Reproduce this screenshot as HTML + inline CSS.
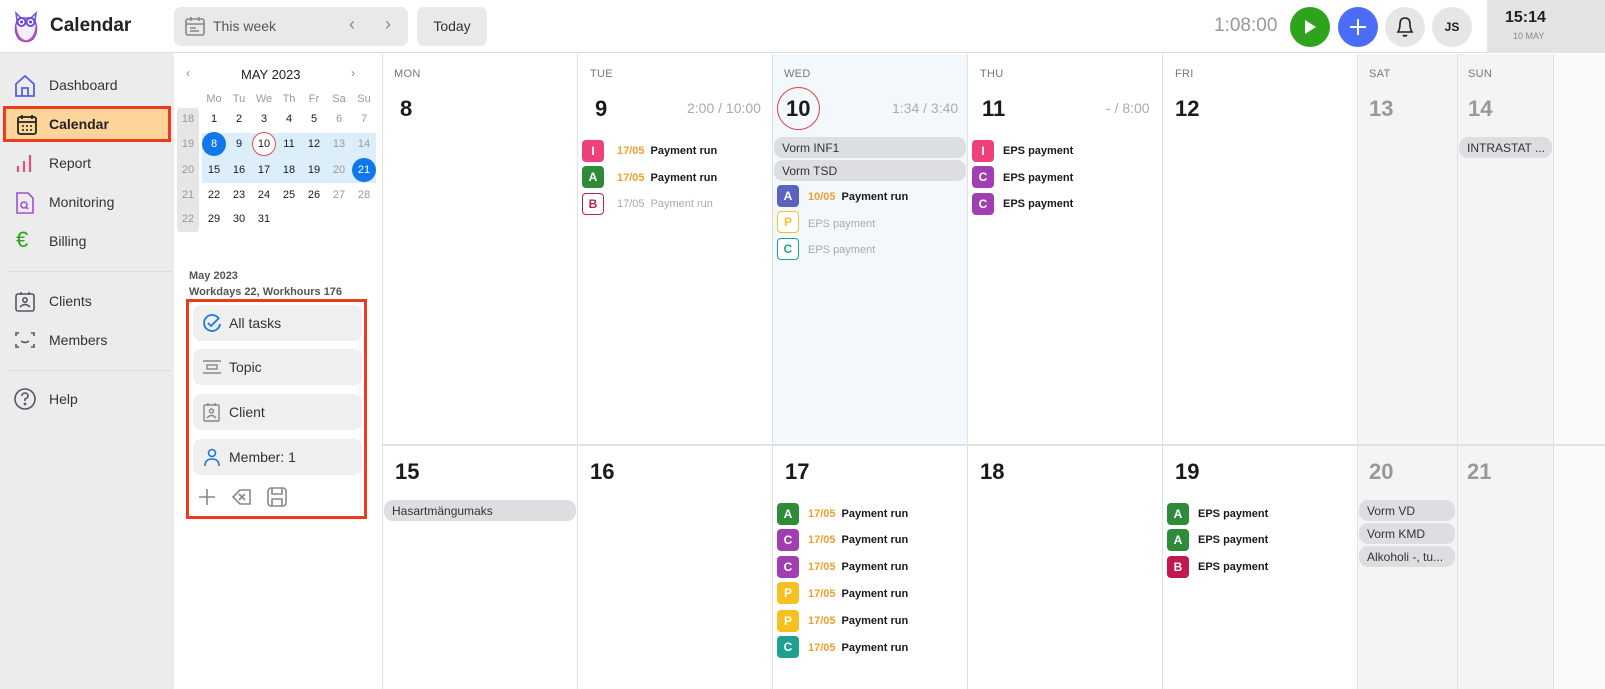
<!DOCTYPE html>
<html><head><meta charset="utf-8">
<style>
*{box-sizing:border-box;margin:0;padding:0}
body{width:1605px;height:689px;overflow:hidden;background:#fff;font-family:"Liberation Sans",sans-serif;color:#1a1a1a;position:relative}
.a{position:absolute}
.side{left:0;top:53px;width:174px;height:636px;background:#ececec}
.nav{position:absolute;left:0;width:174px;height:36px;font-size:14px;color:#333}
.nav span{position:absolute;left:49px;top:10px}
.nav svg{position:absolute;left:14px;top:7px}
.mc{font-size:11px;text-align:center;width:20px;margin-left:-10px}
.dh{font-size:11px;color:#777;letter-spacing:.3px}
.dn{font-size:22px;font-weight:bold}
.vl{width:1px;background:#e1e1e1}
.b{position:absolute;width:22px;height:22px;border-radius:4px;color:#fff;font-size:12px;font-weight:bold;text-align:center;line-height:22px}
.bo{background:#fff;line-height:20px}
.et{position:absolute;font-size:11px;font-weight:bold;white-space:nowrap}
.et i{font-style:normal;color:#f0a030;margin-right:6px}
.pill{position:absolute;height:21px;border-radius:9px;background:#dcdee2;font-size:12px;color:#333;padding:4px 8px;white-space:nowrap}
.fb{position:absolute;left:193px;width:169px;height:36px;background:#efefef;border-radius:8px;font-size:14px;color:#333}
.fb span{position:absolute;left:36px;top:10px}
.fb svg{position:absolute;left:9px;top:8px}
</style></head><body>
<div class="a" style="left:0;top:0;width:1605px;height:53px;border-bottom:1px solid #ddd;background:#fff"></div>
<svg class="a" style="left:13px;top:11px" width="26" height="32" viewBox="0 0 26 32"><path d="M3 2 L8 7 L18 7 L23 2 L22 10 Q26 20 20 28 Q13 33 6 28 Q0 20 4 10Z" fill="#f3eefc" stroke="#7b4fd8" stroke-width="1.5"/><circle cx="8.5" cy="11" r="4" fill="#fff" stroke="#6a4be0" stroke-width="2"/><circle cx="17.5" cy="11" r="4" fill="#fff" stroke="#6a4be0" stroke-width="2"/><circle cx="8.5" cy="11" r="1.5" fill="#5b3fd0"/><circle cx="17.5" cy="11" r="1.5" fill="#5b3fd0"/><path d="M3 16 Q4 28 13 30 Q22 28 23 16" fill="none" stroke="#d04fa0" stroke-width="1.5"/></svg>
<div class="a" style="left:50px;top:15px;font-size:19px;font-weight:bold;color:#222">Calendar</div>
<div class="a" style="left:174px;top:7px;width:234px;height:39px;background:#e9e9e9;border-radius:7px"></div>
<svg class="a" style="left:184px;top:15px" width="22" height="22" viewBox="0 0 22 22" fill="none" stroke="#888" stroke-width="1.6"><rect x="2" y="4" width="18" height="16" rx="2"/><path d="M2 9h18M7 2v4M15 2v4M6 13h6M6 16h9"/></svg>
<div class="a" style="left:213px;top:18px;font-size:14px;color:#555">This week</div>
<div class="a" style="left:349px;top:14px;font-size:18px;color:#888">&#8249;</div>
<div class="a" style="left:385px;top:14px;font-size:18px;color:#888">&#8250;</div>
<div class="a" style="left:417px;top:7px;width:70px;height:39px;background:#e9e9e9;border-radius:7px;font-size:14px;color:#333;text-align:center;line-height:39px">Today</div>
<div class="a" style="left:1214px;top:15px;font-size:19px;color:#999">1:08:00</div>
<div class="a" style="left:1290px;top:7px;width:40px;height:40px;border-radius:50%;background:#2ea41c"></div>
<svg class="a" style="left:1303px;top:19px" width="14" height="16"><path d="M2 1 L13 8 L2 15Z" fill="#fff"/></svg>
<div class="a" style="left:1338px;top:7px;width:40px;height:40px;border-radius:50%;background:#4a6cf7"></div>
<svg class="a" style="left:1348px;top:17px" width="20" height="20"><path d="M10 2v16M2 10h16" stroke="#fff" stroke-width="2"/></svg>
<div class="a" style="left:1385px;top:7px;width:40px;height:40px;border-radius:50%;background:#e6e6e6"></div>
<svg class="a" style="left:1395px;top:15px" width="20" height="24" fill="none" stroke="#222" stroke-width="1.6"><path d="M3 17 Q5 14 5 9 Q5 3 10 3 Q15 3 15 9 Q15 14 17 17Z"/><path d="M8 20 Q10 22 12 20"/></svg>
<div class="a" style="left:1432px;top:7px;width:40px;height:40px;border-radius:50%;background:#e6e6e6;font-size:12px;font-weight:bold;text-align:center;line-height:40px">JS</div>
<div class="a" style="left:1487px;top:0;width:118px;height:53px;background:#e3e3e3"></div>
<div class="a" style="left:1505px;top:9px;font-size:16px;font-weight:bold;color:#222">15:14</div>
<div class="a" style="left:1513px;top:31px;font-size:9px;color:#888">10 MAY</div>

<div class="a side"></div>
<div class="nav" style="top:67px"><svg width="22" height="24" fill="none" stroke="#5a5ee0" stroke-width="1.8"><path d="M2 10 L11 2 L20 10 V22 H2Z"/><path d="M8 22V14h6v8"/></svg><span>Dashboard</span></div>
<div class="nav" style="top:106px;left:3px;width:168px;height:36px;background:#fdd49a;border:3px solid #ee3a1c"><svg width="22" height="24" style="left:10px;top:4px" fill="none" stroke="#222" stroke-width="1.8"><rect x="2" y="4" width="18" height="17" rx="2"/><path d="M2 9h18M6 2v4M16 2v4"/><path d="M6 13h2M10 13h2M14 13h2M6 17h2M10 17h2M14 17h2" stroke-width="1.5"/></svg><span style="left:43px;top:7px;font-weight:bold;color:#222">Calendar</span></div>
<div class="nav" style="top:145px"><svg width="22" height="24" stroke="#e0507a" stroke-width="2.2"><path d="M4 20v-6M10 20V9M16 20V3"/></svg><span>Report</span></div>
<div class="nav" style="top:184px"><svg width="22" height="24" fill="none" stroke="#a050d0" stroke-width="1.6"><path d="M3 2h11l5 5v15H3Z"/><circle cx="10" cy="14" r="3"/><path d="M12 16l2 2"/></svg><span>Monitoring</span></div>
<div class="nav" style="top:223px"><span style="left:16px;top:4px;font-size:22px;color:#2ea41c">€</span><span>Billing</span></div>
<div class="a" style="left:8px;top:271px;width:164px;height:1px;background:#ddd"></div>
<div class="nav" style="top:283px"><svg width="22" height="24" fill="none" stroke="#556" stroke-width="1.6"><rect x="2" y="4" width="18" height="17" rx="2"/><path d="M7 2v3M15 2v3"/><circle cx="11" cy="10" r="2.2"/><path d="M6 17 Q11 12 16 17"/></svg><span>Clients</span></div>
<div class="nav" style="top:322px"><svg width="22" height="24" fill="none" stroke="#556" stroke-width="1.6"><path d="M2 7V4h3M17 4h3v3M2 15v3h3M17 18h3v-3M7 12 Q11 15 15 12"/></svg><span>Members</span></div>
<div class="a" style="left:8px;top:370px;width:164px;height:1px;background:#ddd"></div>
<div class="nav" style="top:381px"><svg width="24" height="24" fill="none" stroke="#556" stroke-width="1.6"><circle cx="11" cy="11" r="10"/><path d="M8 8 Q8 5 11 5 Q14 5 14 8 Q14 10 11 11v2"/><circle cx="11" cy="16" r=".6"/></svg><span>Help</span></div>

<div class="a" style="left:186px;top:66px;font-size:12px;color:#888">&#8249;</div>
<div class="a" style="left:241px;top:67px;font-size:13px;color:#222">MAY 2023</div>
<div class="a" style="left:351px;top:66px;font-size:12px;color:#888">&#8250;</div>
<div class="a" style="left:177px;top:108px;width:22px;height:124px;background:#e6e6e6;border-radius:3px"></div>
<div class="a" style="left:202px;top:133px;width:174px;height:50px;background:#ddeefb"></div>
<div class="a" style="left:202px;top:132px;width:24px;height:24px;border-radius:50%;background:#1078ea"></div>
<div class="a" style="left:252px;top:132px;width:24px;height:24px;border-radius:50%;border:1px solid #e05050;background:#fff"></div>
<div class="a" style="left:352px;top:158px;width:24px;height:24px;border-radius:50%;background:#1078ea"></div>

<div class="a" style="left:189px;top:270px;font-size:11px;font-weight:bold;color:#555">May 2023</div>
<div class="a" style="left:189px;top:286px;font-size:11px;font-weight:bold;color:#555">Workdays 22, Workhours 176</div>
<div class="a" style="left:186px;top:299px;width:181px;height:220px;border:3px solid #ee3a1c"></div>
<div class="fb" style="top:305px"><svg width="20" height="20" fill="none" stroke="#1a78e0" stroke-width="1.8"><path d="M17 6 A8 8 0 1 0 18 11"/><path d="M6 10l3 3 8-8"/></svg><span>All tasks</span></div>
<div class="fb" style="top:349px"><svg width="20" height="20" fill="none" stroke="#888" stroke-width="1.4"><path d="M1 4h18M1 16h18"/><rect x="5" y="8" width="10" height="4"/></svg><span>Topic</span></div>
<div class="fb" style="top:394px"><svg width="20" height="20" fill="none" stroke="#888" stroke-width="1.4"><rect x="2" y="3" width="15" height="16" rx="1"/><path d="M6 1v3M13 1v3"/><circle cx="9.5" cy="9" r="2"/><path d="M5 16 Q9.5 11 14 16"/></svg><span>Client</span></div>
<div class="fb" style="top:439px"><svg width="20" height="20" fill="none" stroke="#1a78e0" stroke-width="1.6"><circle cx="10" cy="6" r="3.5"/><path d="M3 19 Q3 12 10 12 Q17 12 17 19"/></svg><span>Member: 1</span></div>
<svg class="a" style="left:197px;top:486px" width="100" height="22" fill="none" stroke="#888" stroke-width="1.6"><path d="M10 3v16M2 11h16"/><path d="M53 4h-10l-7 7 7 7h10Z M42 8l6 6M48 8l-6 6"/><rect x="71" y="2" width="18" height="18" rx="3"/><path d="M75 2v6h10V2M75 20v-7h10v7"/></svg>

<div class="a" style="left:1357px;top:54px;width:196px;height:635px;background:#f4f4f4"></div>
<div class="a" style="left:1553px;top:54px;width:52px;height:635px;background:#fafafa"></div>
<div class="a" style="left:773px;top:54px;width:194px;height:390px;background:#f3f8fd"></div>
<div class="a vl" style="left:382px;top:54px;height:635px"></div>
<div class="a vl" style="left:577px;top:54px;height:635px"></div>
<div class="a vl" style="left:772px;top:54px;height:635px"></div>
<div class="a vl" style="left:967px;top:54px;height:635px"></div>
<div class="a vl" style="left:1162px;top:54px;height:635px"></div>
<div class="a vl" style="left:1357px;top:54px;height:635px"></div>
<div class="a vl" style="left:1457px;top:54px;height:635px"></div>
<div class="a vl" style="left:1553px;top:54px;height:635px"></div>
<div class="a" style="left:383px;top:444px;width:1222px;height:2px;background:#e1e1e1"></div>

<div class="a dh" style="left:394px;top:68px">MON</div>
<div class="a dh" style="left:590px;top:68px">TUE</div>
<div class="a dh" style="left:784px;top:68px">WED</div>
<div class="a dh" style="left:980px;top:68px">THU</div>
<div class="a dh" style="left:1175px;top:68px">FRI</div>
<div class="a dh" style="left:1369px;top:68px">SAT</div>
<div class="a dh" style="left:1468px;top:68px">SUN</div>

<div class="a dn" style="left:400px;top:96px">8</div>
<div class="a dn" style="left:595px;top:96px">9</div>
<div class="a" style="left:687px;top:100px;font-size:14px;color:#aaa">2:00 / 10:00</div>
<div class="a" style="left:777px;top:87px;width:43px;height:43px;border-radius:50%;border:1px solid #e04040"></div>
<div class="a dn" style="left:786px;top:96px">10</div>
<div class="a" style="left:892px;top:100px;font-size:14px;color:#aaa">1:34 / 3:40</div>
<div class="a dn" style="left:982px;top:96px">11</div>
<div class="a" style="left:1106px;top:100px;font-size:14px;color:#aaa">- / 8:00</div>
<div class="a dn" style="left:1175px;top:96px">12</div>
<div class="a dn" style="left:1369px;top:96px;color:#999">13</div>
<div class="a dn" style="left:1468px;top:96px;color:#999">14</div>

<div class="a dn" style="left:395px;top:459px">15</div>
<div class="a dn" style="left:590px;top:459px">16</div>
<div class="a dn" style="left:785px;top:459px">17</div>
<div class="a dn" style="left:980px;top:459px">18</div>
<div class="a dn" style="left:1175px;top:459px">19</div>
<div class="a dn" style="left:1369px;top:459px;color:#999">20</div>
<div class="a dn" style="left:1467px;top:459px;color:#999">21</div>

<div class="pill" style="left:1459px;top:137px;width:93px">INTRASTAT ...</div>
<div class="pill" style="left:774px;top:137px;width:192px">Vorm INF1</div>
<div class="pill" style="left:774px;top:160px;width:192px">Vorm TSD</div>
<div class="pill" style="left:384px;top:500px;width:192px">Hasartmängumaks</div>
<div class="pill" style="left:1359px;top:500px;width:96px">Vorm VD</div>
<div class="pill" style="left:1359px;top:523px;width:96px">Vorm KMD</div>
<div class="pill" style="left:1359px;top:546px;width:96px">Alkoholi -, tu...</div>

<div class="b" style="left:582px;top:140px;background:#f0407a">I</div><div class="et" style="left:617px;top:145px"><i>17/05</i>Payment run</div>
<div class="b" style="left:582px;top:166px;background:#2f8a3a">A</div><div class="et" style="left:617px;top:172px"><i>17/05</i>Payment run</div>
<div class="b bo" style="left:582px;top:193px;border:1px solid #c0204a;color:#c0204a">B</div><div class="et" style="left:617px;top:198px;font-weight:normal;color:#aaa"><i style="color:#aaa">17/05</i>Payment run</div>

<div class="b" style="left:777px;top:185px;background:#5a64c0">A</div><div class="et" style="left:808px;top:191px"><i>10/05</i>Payment run</div>
<div class="b bo" style="left:777px;top:211px;border:1px solid #f5c030;color:#f5c030">P</div><div class="et" style="left:808px;top:218px;font-weight:normal;color:#aaa">EPS payment</div>
<div class="b bo" style="left:777px;top:238px;border:1px solid #20a090;color:#20a090">C</div><div class="et" style="left:808px;top:244px;font-weight:normal;color:#aaa">EPS payment</div>

<div class="b" style="left:972px;top:140px;background:#f0407a">I</div><div class="et" style="left:1003px;top:145px">EPS payment</div>
<div class="b" style="left:972px;top:166px;background:#a040b0">C</div><div class="et" style="left:1003px;top:172px">EPS payment</div>
<div class="b" style="left:972px;top:193px;background:#a040b0">C</div><div class="et" style="left:1003px;top:198px">EPS payment</div>

<div class="b" style="left:777px;top:503px;background:#2f8a3a">A</div><div class="et" style="left:808px;top:508px"><i>17/05</i>Payment run</div>
<div class="b" style="left:777px;top:529px;background:#a040b0">C</div><div class="et" style="left:808px;top:534px"><i>17/05</i>Payment run</div>
<div class="b" style="left:777px;top:556px;background:#a040b0">C</div><div class="et" style="left:808px;top:561px"><i>17/05</i>Payment run</div>
<div class="b" style="left:777px;top:582px;background:#f5c020">P</div><div class="et" style="left:808px;top:588px"><i>17/05</i>Payment run</div>
<div class="b" style="left:777px;top:610px;background:#f5c020">P</div><div class="et" style="left:808px;top:615px"><i>17/05</i>Payment run</div>
<div class="b" style="left:777px;top:636px;background:#20a090">C</div><div class="et" style="left:808px;top:642px"><i>17/05</i>Payment run</div>

<div class="b" style="left:1167px;top:503px;background:#2f8a3a">A</div><div class="et" style="left:1198px;top:508px">EPS payment</div>
<div class="b" style="left:1167px;top:529px;background:#2f8a3a">A</div><div class="et" style="left:1198px;top:534px">EPS payment</div>
<div class="b" style="left:1167px;top:556px;background:#c01850">B</div><div class="et" style="left:1198px;top:561px">EPS payment</div>

<div class="a mc" style="left:214px;top:93px;color:#999">Mo</div><div class="a mc" style="left:239px;top:93px;color:#999">Tu</div><div class="a mc" style="left:264px;top:93px;color:#999">We</div><div class="a mc" style="left:289px;top:93px;color:#999">Th</div><div class="a mc" style="left:314px;top:93px;color:#999">Fr</div><div class="a mc" style="left:339px;top:93px;color:#999">Sa</div><div class="a mc" style="left:364px;top:93px;color:#999">Su</div>
<div class="a mc" style="left:188px;top:113px;color:#999">18</div><div class="a mc" style="left:214px;top:113px">1</div><div class="a mc" style="left:239px;top:113px">2</div><div class="a mc" style="left:264px;top:113px">3</div><div class="a mc" style="left:289px;top:113px">4</div><div class="a mc" style="left:314px;top:113px">5</div><div class="a mc" style="left:339px;top:113px;color:#999">6</div><div class="a mc" style="left:364px;top:113px;color:#999">7</div>
<div class="a mc" style="left:188px;top:138px;color:#999">19</div><div class="a mc" style="left:214px;top:138px;color:#fff">8</div><div class="a mc" style="left:239px;top:138px">9</div><div class="a mc" style="left:264px;top:138px">10</div><div class="a mc" style="left:289px;top:138px">11</div><div class="a mc" style="left:314px;top:138px">12</div><div class="a mc" style="left:339px;top:138px;color:#999">13</div><div class="a mc" style="left:364px;top:138px;color:#999">14</div>
<div class="a mc" style="left:188px;top:164px;color:#999">20</div><div class="a mc" style="left:214px;top:164px">15</div><div class="a mc" style="left:239px;top:164px">16</div><div class="a mc" style="left:264px;top:164px">17</div><div class="a mc" style="left:289px;top:164px">18</div><div class="a mc" style="left:314px;top:164px">19</div><div class="a mc" style="left:339px;top:164px;color:#999">20</div><div class="a mc" style="left:364px;top:164px;color:#fff">21</div>
<div class="a mc" style="left:188px;top:189px;color:#999">21</div><div class="a mc" style="left:214px;top:189px">22</div><div class="a mc" style="left:239px;top:189px">23</div><div class="a mc" style="left:264px;top:189px">24</div><div class="a mc" style="left:289px;top:189px">25</div><div class="a mc" style="left:314px;top:189px">26</div><div class="a mc" style="left:339px;top:189px;color:#999">27</div><div class="a mc" style="left:364px;top:189px;color:#999">28</div>
<div class="a mc" style="left:188px;top:213px;color:#999">22</div><div class="a mc" style="left:214px;top:213px">29</div><div class="a mc" style="left:239px;top:213px">30</div><div class="a mc" style="left:264px;top:213px">31</div>
</body></html>
